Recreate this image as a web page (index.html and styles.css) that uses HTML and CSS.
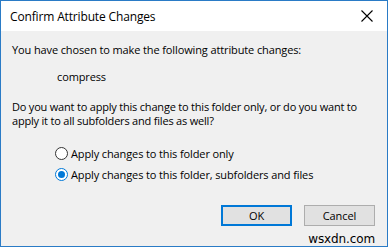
FILE: index.html
```html
<!DOCTYPE html>
<html>
<head>
<meta charset="utf-8">
<link rel="stylesheet" href="styles.css">
</head>
<body>
<div class="window">
  <div class="titlebar">
    <span class="title">Confirm Attribute Changes</span>
    <svg class="close" width="12" height="12" viewBox="0 0 12 12"><path d="M0.5 0.5L11.5 11.5M11.5 0.5L0.5 11.5" stroke="#000" stroke-width="1.1" fill="none"/></svg>
  </div>
  <div class="content">
    <p class="intro">You have chosen to make the following attribute changes:</p>
    <p class="attr">compress</p>
    <p class="question">Do you want to apply this change to this folder only, or do you want to</p>
    <p class="question q2">apply it to all subfolders and files as well?</p>
    <div class="options">
      <label class="option"><span class="radio"></span>Apply changes to this folder only</label>
      <label class="option"><span class="radio checked"></span>Apply changes to this folder, subfolders and files</label>
    </div>
    <div class="buttons">
      <button class="btn primary">OK</button>
      <button class="btn">Cancel</button>
    </div>
    <span class="watermark">wsxdn.com</span>
  </div>
</div>
</body>
</html>
```
FILE: styles.css
```css
* { box-sizing: border-box; }
html, body { margin: 0; padding: 0; }
body { width: 388px; height: 247px; overflow: hidden; font-family: "Open Sans", "Noto Sans", sans-serif; font-size: 11px; letter-spacing: -0.12px; color: #000; }
.window { width: 388px; height: 247px; border: 1px solid #2a7bc6; display: flex; flex-direction: column; background: #f0f0f0; }
.titlebar { height: 30px; background: #fff; display: flex; align-items: center; justify-content: space-between; padding: 0 14px 0 9px; }
.title { font-size: 12px; letter-spacing: -0.15px; }
.content { flex: 1; position: relative; padding: 4px 0 0 11px; }
p { margin: 0; white-space: nowrap; }
.intro { line-height: 18px; margin-top: 6px; }
.attr { padding-left: 45px; margin-top: 9px; line-height: 18px; }
.question { margin-top: 14px; line-height: 13px; height: 13px; letter-spacing: -0.2px; }
.question.q2 { margin-top: 1px; }
.options { margin-top: 19px; padding-left: 43px; display: flex; flex-direction: column; gap: 7px; }
.option { display: flex; align-items: center; height: 14px; }
.radio { width: 13px; height: 13px; border: 1px solid #333; border-radius: 50%; background: #fff; margin-right: 3px; display: flex; align-items: center; justify-content: center; }
.radio.checked { border-color: #0078d7; }
.radio.checked::after { content: ""; width: 7px; height: 7px; border-radius: 50%; background: #0078d7; }
.buttons { display: flex; justify-content: flex-end; gap: 12px; padding-right: 12px; margin-top: 24px; }
.btn { width: 71px; height: 21px; font-family: inherit; font-size: 11px; letter-spacing: -0.1px; background: #e1e1e1; border: 1px solid #adadad; padding: 0; color: #000; }
.btn.primary { border: 2px solid #0078d7; }
.watermark { position: absolute; right: 12px; bottom: 0px; font-family: "DejaVu Sans", sans-serif; font-size: 12px; line-height: 13px; color: #000; }
```
